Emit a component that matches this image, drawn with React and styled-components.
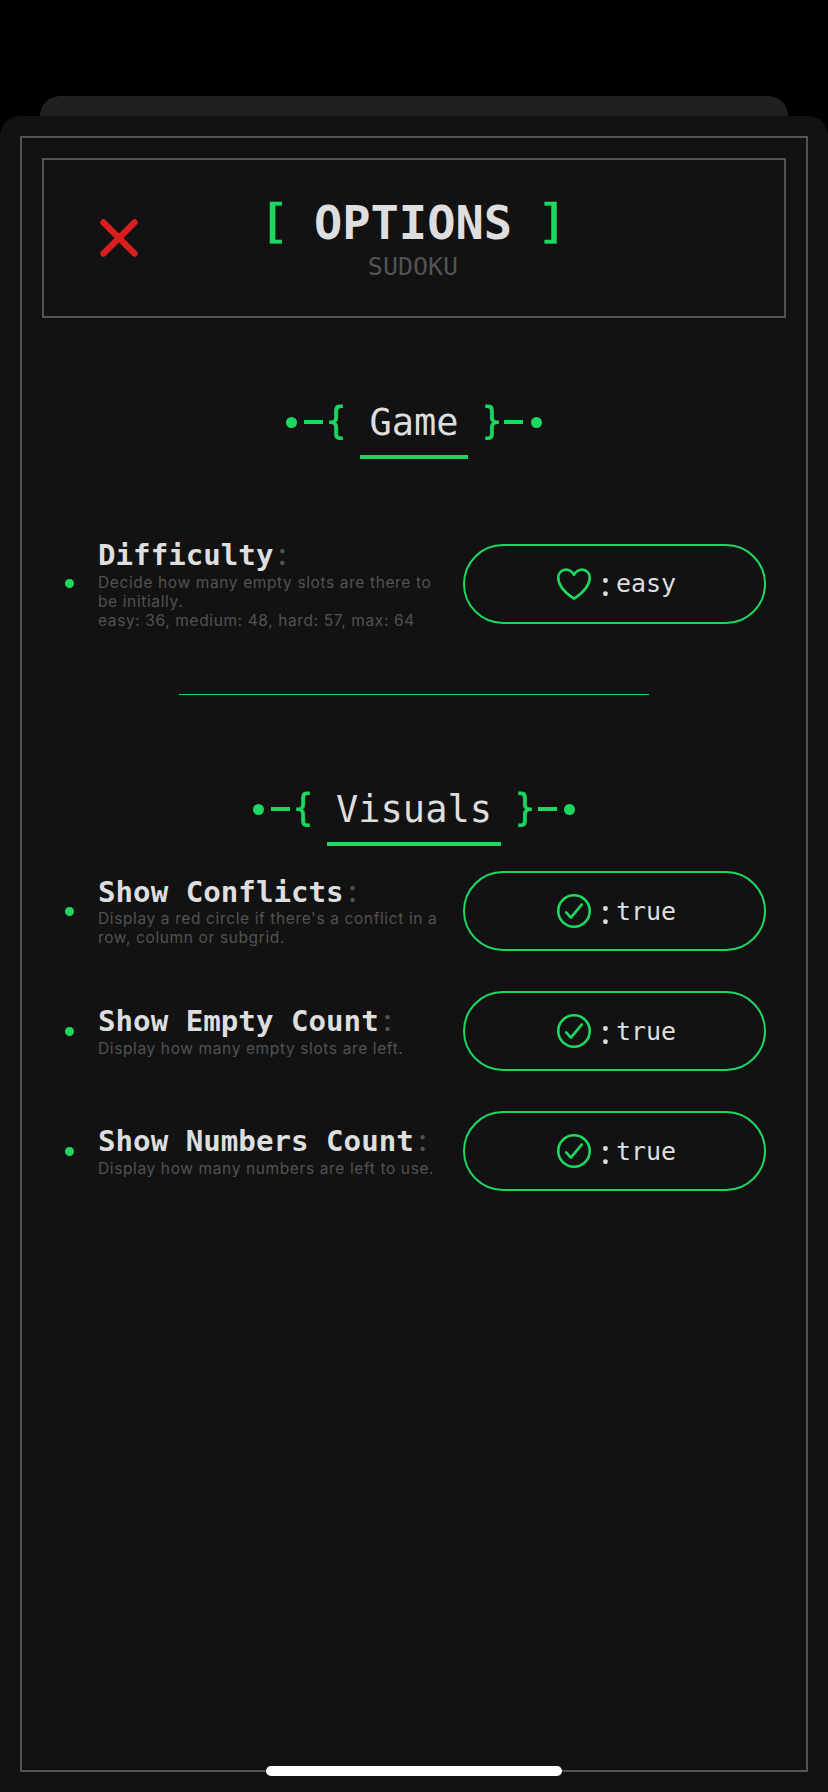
import React from "react";
import styled, { createGlobalStyle } from "styled-components";

const GREEN = "#1ed760";
const TEXT = "#dedede";
const MUTED = "#535353";
const SURFACE = "#121212";

const GlobalStyle = createGlobalStyle`
  *, *::before, *::after { box-sizing: border-box; }
  body { margin: 0; background: #000; color: ${TEXT}; font-family: "DejaVu Sans Mono", monospace; }
  h1, h2, h3, p { margin: 0; font-weight: 400; }
  button { font: inherit; color: inherit; background: none; border: 0; padding: 0; }
`;

const Screen = styled.div`
  position: relative;
  width: 828px;
  height: 1792px;
  padding-top: 96px;
  overflow: hidden;
  background: #000;
  display: flex;
  flex-direction: column;
`;

const BackCard = styled.div`
  height: 20px;
  margin: 0 40px;
  border-radius: 20px 20px 0 0;
  background: #202020;
`;

const Sheet = styled.main`
  flex: 1;
  padding: 20px;
  border-radius: 20px 20px 0 0;
  background: ${SURFACE};
  display: flex;
`;

const Frame = styled.div`
  flex: 1;
  border: 2px solid ${MUTED};
  padding: 20px;
  display: flex;
  flex-direction: column;
`;

const Header = styled.header`
  height: 160px;
  border: 2px solid ${MUTED};
  display: grid;
  grid-template-columns: 150px 1fr 152px;
  align-items: center;
`;

const CloseButton = styled.button`
  justify-self: center;
  width: 38px;
  height: 38px;
  svg { display: block; }
`;

const Titles = styled.div`
  text-align: center;
`;

const Title = styled.h1`
  display: flex;
  justify-content: center;
  gap: 26px;
  font-size: 47px;
  line-height: 56px;
  font-weight: 700;
`;

const Bracket = styled.span`
  color: ${GREEN};
  font-weight: 400;
  transform: translateY(-2.5px) scaleX(1.22);
  -webkit-text-stroke: 0.3px ${GREEN};
`;

const Subtitle = styled.p`
  padding-top: 1px;
  font-size: 25px;
  line-height: 30px;
  color: ${MUTED};
`;

const SectionHeading = styled.h2`
  display: flex;
  justify-content: center;
  gap: 13px;
  margin-top: ${(p) => p.$top}px;
  height: 58px;
  font-size: 37px;
  line-height: 43px;
`;

const Ornament = styled.span`
  display: flex;
  flex-direction: ${(p) => (p.$flip ? "row-reverse" : "row")};
  color: ${GREEN};
`;

const Cell = styled.span`
  width: 22.3px;
  height: 42px;
  display: flex;
  align-items: center;
  justify-content: center;
`;

const Brace = styled.span`
  display: inline-block;
  transform: translateY(-1px) scaleX(0.88);
  -webkit-text-stroke: 0.9px ${GREEN};
`;

const Bullet = styled.i`
  width: 11px;
  height: 11px;
  border-radius: 50%;
  background: ${GREEN};
`;

const Dash = styled.i`
  width: 19px;
  height: 4px;
  background: ${GREEN};
`;

const Word = styled.span`
  padding: 0 9px;
  border-bottom: 4px solid ${GREEN};
`;

const Rows = styled.div`
  margin-top: ${(p) => p.$top}px;
  padding: 0 20px 0 23px;
  display: flex;
  flex-direction: column;
  gap: 40px;
`;

const Row = styled.div`
  height: 80px;
  display: grid;
  grid-template-columns: 9px 341px 303px;
  column-gap: 24px;
  justify-content: start;
  align-items: center;
`;

const Marker = styled.i`
  width: 9px;
  height: 9px;
  border-radius: 50%;
  background: ${GREEN};
`;

const Name = styled.h3`
  font-size: 29.15px;
  line-height: 34px;
  font-weight: 700;
  white-space: nowrap;
`;

const Colon = styled.span`
  display: inline-block;
  width: 17.5px;
  text-align: center;
  font-family: "Open Sans", sans-serif;
  font-weight: 600;
  line-height: 1;
  color: ${MUTED};
`;

const Description = styled.p`
  padding-top: 0.5px;
  font-family: Inter, sans-serif;
  font-size: 15.5px;
  line-height: 19px;
  letter-spacing: 0.62px;
  color: ${MUTED};
  white-space: pre;
`;

const Pill = styled.button`
  height: 80px;
  border: 2px solid ${GREEN};
  border-radius: 40px;
  display: flex;
  align-items: center;
  justify-content: center;
  font-size: 25px;
  svg { display: block; flex: none; }
`;

const PillColon = styled.span`
  width: 21px;
  text-align: center;
  font-family: "Open Sans", sans-serif;
  font-size: 32px;
  font-weight: 600;
  line-height: 41px;
`;

const Divider = styled.hr`
  width: 470px;
  height: 1px;
  margin: 76px auto 0;
  border: 0;
  background: ${GREEN};
`;

const HomeIndicator = styled.div`
  position: absolute;
  left: 266px;
  bottom: 16px;
  width: 296px;
  height: 10px;
  border-radius: 5px;
  background: #fff;
`;

const CloseIcon = () => (
  <svg width="38" height="38" viewBox="0 0 38 38" fill="none" stroke="#d91e1e" strokeWidth="6.4" strokeLinecap="round">
    <path d="M3.5 3.5L34.5 34.5M34.5 3.5L3.5 34.5" />
  </svg>
);

const icons = {
  heart: (
    <path d="M352.92 80C288 80 256 144 256 144s-32-64-96.92-64c-52.76 0-94.54 44.14-95.08 96.81-1.1 109.33 86.73 187.08 183 252.42a16 16 0 0018 0c96.26-65.34 184.09-143.09 183-252.42-.54-52.67-42.32-96.81-95.08-96.81z" />
  ),
  check: (
    <>
      <circle cx="256" cy="256" r="192" />
      <path d="M352 176L217.6 336 160 272" />
    </>
  ),
};

const PillIcon = ({ name }) => (
  <svg width="42" height="42" viewBox="0 0 512 512" fill="none" stroke={GREEN} strokeWidth="32" strokeLinecap="round" strokeLinejoin="round">
    {icons[name]}
  </svg>
);

const Decoration = ({ brace, flip }) => (
  <Ornament $flip={flip}>
    <Cell><Bullet /></Cell>
    <Cell><Dash /></Cell>
    <Cell><Brace>{brace}</Brace></Cell>
  </Ornament>
);

const Heading = ({ children, top }) => (
  <SectionHeading $top={top}>
    <Decoration brace="{" />
    <Word>{children}</Word>
    <Decoration brace="}" flip />
  </SectionHeading>
);

const Option = ({ name, description, icon, value }) => (
  <Row>
    <Marker />
    <div>
      <Name>{name}<Colon>:</Colon></Name>
      <Description>{description}</Description>
    </div>
    <Pill>
      <PillIcon name={icon} />
      <PillColon>:</PillColon>
      <span>{value}</span>
    </Pill>
  </Row>
);

export default function App() {
  return (
    <>
      <GlobalStyle />
      <Screen>
        <BackCard />
        <Sheet>
          <Frame>
            <Header>
              <CloseButton aria-label="Close"><CloseIcon /></CloseButton>
              <Titles>
                <Title>
                  <Bracket>[</Bracket>
                  <span>OPTIONS</span>
                  <Bracket>]</Bracket>
                </Title>
                <Subtitle>SUDOKU</Subtitle>
              </Titles>
            </Header>

            <Heading top={83}>Game</Heading>
            <Rows $top={79}>
              <Option
                name="Difficulty"
                description={"Decide how many empty slots are there to\nbe initially.\neasy: 36, medium: 48, hard: 57, max: 64"}
                icon="heart"
                value="easy"
              />
            </Rows>
            <Divider />

            <Heading top={93}>Visuals</Heading>
            <Rows $top={25}>
              <Option
                name="Show Conflicts"
                description={"Display a red circle if there's a conflict in a\nrow, column or subgrid."}
                icon="check"
                value="true"
              />
              <Option name="Show Empty Count" description="Display how many empty slots are left." icon="check" value="true" />
              <Option name="Show Numbers Count" description="Display how many numbers are left to use." icon="check" value="true" />
            </Rows>
          </Frame>
        </Sheet>
        <HomeIndicator />
      </Screen>
    </>
  );
}
